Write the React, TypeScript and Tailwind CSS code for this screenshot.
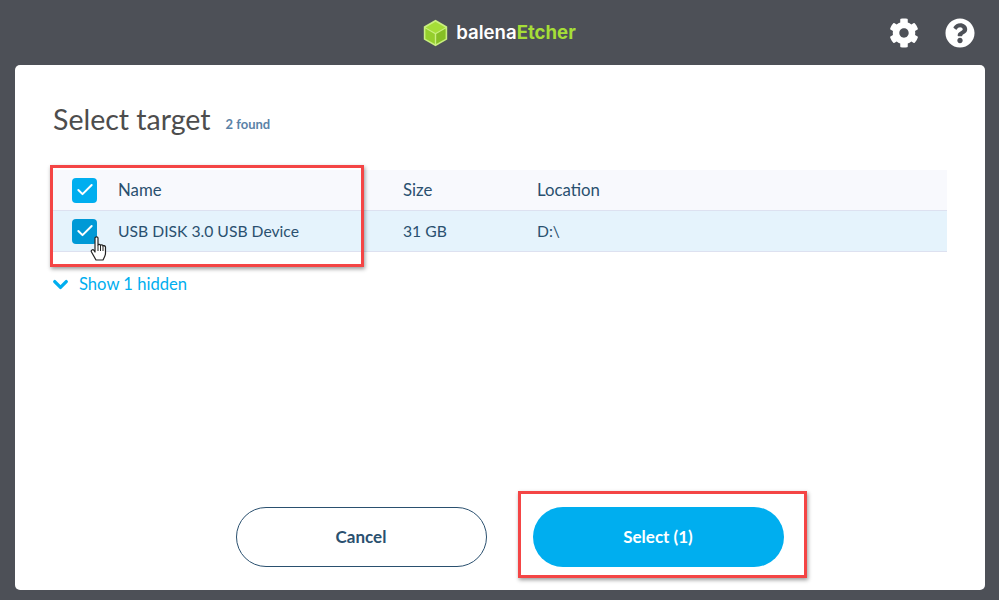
import { Check as CheckIcon, ChevronDown } from "lucide-react";
import { FaCog, FaQuestionCircle } from "react-icons/fa";

const font = { fontFamily: '"Lato", "Noto Sans", sans-serif' };

function Logo() {
  return (
    <div className="flex items-center gap-[8px]">
      <svg width="25" height="28" viewBox="0 0 25 28">
        <path d="M12.5 0.8 L24.2 7.4 V20.6 L12.5 27.2 L0.8 20.6 V7.4 Z" fill="#c9ef7f" />
        <path d="M12.5 2.8 L22.4 8.4 L12.5 14 L2.6 8.4 Z" fill="#a5de37" />
        <path d="M2.4 9.6 L11.8 14.9 V25 L2.4 19.7 Z" fill="#95cf2c" />
        <path d="M13.2 14.9 L22.6 9.6 V19.7 L13.2 25 Z" fill="#86bf25" />
      </svg>
      <div className="text-[18.6px] font-bold leading-none" style={{ fontFamily: '"Inter", sans-serif' }}>
        <span className="text-white font-semibold">balena</span>
        <span className="text-[#a5de37]">Etcher</span>
      </div>
    </div>
  );
}

function Check({ dark }: { dark?: boolean }) {
  return (
    <div className={`w-[25px] h-[25px] rounded-[4px] flex items-center justify-center ${dark ? "bg-[#0099d6]" : "bg-[#00aeef]"}`}>
      <CheckIcon size={20} strokeWidth={2.4} className="text-white" />
    </div>
  );
}

function Row({ name, size, location, selected }: { name: string; size: string; location: string; selected?: boolean }) {
  return (
    <div className={`flex items-center h-[41px] border-b border-[#dde1f0] text-[#2a506f] ${selected ? "bg-[#e5f3fc] text-[15.7px]" : "bg-[#f8f9fd] text-[16.8px]"}`}>
      <div className="w-[65px] pl-[19px]">
        <Check dark={selected} />
      </div>
      <div className={`w-[285px] ${selected ? "pt-[1px]" : ""}`}>{name}</div>
      <div className={`w-[134px] ${selected ? "pt-[1px]" : ""}`}>{size}</div>
      <div className={selected ? "pt-[1px]" : ""}>{location}</div>
    </div>
  );
}

function Cursor() {
  return (
    <svg className="absolute left-[90px] top-[236px]" width="19" height="25" viewBox="0 0 19 25">
      <path
        d="M5 2 C5 0.5 8 0.5 8 2 V9 C8 8 10.5 8 10.5 9.5 C10.5 8.5 13 8.5 13 10 C13 9 15.5 9.5 15.5 11 V17 C15.5 20 14 22 13 24 H6 L1.5 16 C0.5 14 3 13 4 14.5 L5 16 Z"
        fill="white"
        stroke="#222"
        strokeWidth="1.2"
        strokeLinejoin="round"
      />
      <path d="M8 9 V15 M10.5 9.5 V15 M13 10 V15" stroke="#222" strokeWidth="1" />
    </svg>
  );
}

export default function App() {
  return (
    <div className="relative w-[999px] h-[600px] overflow-hidden bg-[#4d5057] flex flex-col" style={font}>
      <header className="relative h-[65px] shrink-0 flex items-center justify-center">
        <Logo />
        <div className="absolute right-[24px] top-[18px] flex items-center gap-[26px] text-white">
          <FaCog className="text-[30px]" />
          <FaQuestionCircle className="text-[30px]" />
        </div>
      </header>

      <main className="ml-[15px] mr-[14px] h-[525px] bg-white rounded-[5px] px-[38px] pt-[37px] flex flex-col">
        <div className="flex items-baseline h-[34px]">
          <h1 className="text-[28.5px] leading-[34px] text-[#4d4d4d]">Select target</h1>
          <span className="ml-[15px] text-[13px] font-bold text-[#5b82a7] relative top-[-1px]">2 found</span>
        </div>

        <div className="mt-[34px]">
          <Row name="Name" size="Size" location="Location" />
          <Row name="USB DISK 3.0 USB Device" size="31 GB" location="D:\" selected />
        </div>

        <button className="mt-[20px] self-start flex items-center gap-[7px] text-[16.6px] text-[#00aeef] leading-[24px]">
          <ChevronDown size={23} strokeWidth={3.5} className="ml-[-4px]" />
          Show 1 hidden
        </button>

        <div className="mt-auto mb-[23px] flex justify-center gap-[46px] ml-[19px]">
          <button className="w-[251px] h-[60px] rounded-full border border-[#2a506f] text-[#2a506f] text-[17px] font-bold">
            Cancel
          </button>
          <button className="w-[251px] h-[60px] rounded-full bg-[#00aeef] text-white text-[17px] font-bold">
            Select (1)
          </button>
        </div>
      </main>

      <Cursor />

      {/* red annotation boxes drawn on top of the screenshot */}
      <div className="absolute left-[50px] top-[165px] w-[314px] h-[102px] border-[3px] border-[#f44545] shadow-[1px_2px_4px_rgba(0,0,0,0.4)]" />
      <div className="absolute left-[518px] top-[491px] w-[289px] h-[87px] border-[3px] border-[#f44545] shadow-[1px_2px_4px_rgba(0,0,0,0.4)]" />
    </div>
  );
}
